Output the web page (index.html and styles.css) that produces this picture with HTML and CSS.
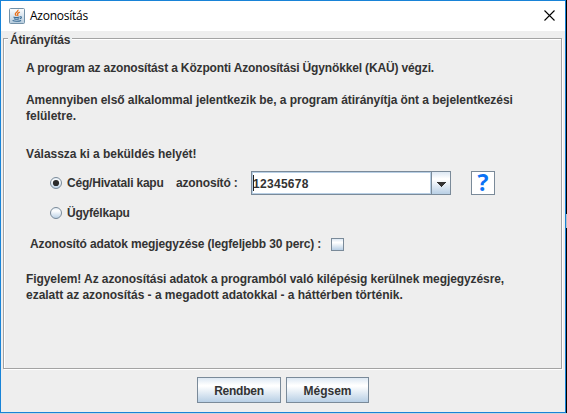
FILE: index.html
```html
<!DOCTYPE html>
<html lang="hu">
<head>
<meta charset="utf-8">
<title>Azonosítás</title>
<link rel="stylesheet" href="styles.css">
</head>
<body>
<div class="window">
  <header class="titlebar">
    <svg class="app-icon" width="16" height="16" viewBox="0 0 16 16">
      <defs><linearGradient id="tile" x1="0" y1="0" x2="0" y2="1"><stop offset="0" stop-color="#fdfefe"/><stop offset="1" stop-color="#b5cbdd"/></linearGradient></defs>
      <rect x=".5" y=".5" width="15" height="15" rx="1" fill="url(#tile)" stroke="#7391a8"/>
      <path d="M9 1.8C9.6 3.8 6 4.4 6.3 6.2c.1.8.9 1.2 1 2M10.8 4.2C8.4 5.2 8.2 6.2 8.8 7c.3.4 0 .8-.3 1.2" fill="none" stroke="#e8711c" stroke-width="1.3"/>
      <path d="M4.5 8.9c1.5.7 4.3.6 6 0M5 10.8c1.6.6 3.6.6 5 0M3.6 12.6c2 .9 6.3.9 8.5-.2M10.8 8.8c2.2-.6 2 1.6-.1 2" fill="none" stroke="#386b95" stroke-width="1.1"/>
    </svg>
    <span class="title">Azonosítás</span>
    <svg class="close" width="11" height="11" viewBox="0 0 11 11"><path d="M.5 .5l10 10M10.5 .5l-10 10" stroke="#000" stroke-width="1.1"/></svg>
  </header>
  <main class="group">
    <h1 class="legend">Átirányítás</h1>
    <p class="intro">A program az azonosítást a Központi Azonosítási Ügynökkel (KAÜ) végzi.</p>
    <p class="redirect"><span class="redirect-first">Amennyiben első alkalommal jelentkezik be, a program átirányítja önt a bejelentkezési</span><br>felületre.</p>
    <p class="choose">Válassza ki a beküldés helyét!</p>
    <div class="row row-company">
      <svg class="radio" width="12" height="12" viewBox="0 0 12 12"><defs><linearGradient id="ball" x1="0" y1="0" x2="0" y2="1"><stop offset="0" stop-color="#dce8f2"/><stop offset=".3" stop-color="#fff"/><stop offset="1" stop-color="#b8cfe5"/></linearGradient></defs><circle cx="6" cy="6" r="5.5" fill="url(#ball)" stroke="#7a8a99"/><circle cx="6" cy="6" r="3.1" fill="#2b2b2b"/></svg>
      <span class="company">Cég/Hivatali kapu</span>
      <span class="ident">azonosító :</span>
      <div class="combo"><div class="field"><span class="caret"></span>12345678</div><div class="arrow"><svg width="10" height="5" viewBox="0 0 10 5" shape-rendering="crispEdges"><path d="M0 0h10L5 5z" fill="#333"/></svg></div></div>
      <div class="help">?</div>
    </div>
    <div class="row row-client">
      <svg class="radio" width="12" height="12" viewBox="0 0 12 12"><circle cx="6" cy="6" r="5.5" fill="url(#ball)" stroke="#7a8a99"/></svg>
      <span class="client">Ügyfélkapu</span>
    </div>
    <div class="row row-remember">
      <span class="remember">Azonosító adatok megjegyzése (legfeljebb 30 perc) :</span>
      <span class="checkbox"></span>
    </div>
    <p class="notice"><span class="notice-first">Figyelem! Az azonosítási adatok a programból való kilépésig kerülnek megjegyzésre,</span><br><span class="notice-second">ezalatt az azonosítás - a megadott adatokkal - a háttérben történik.</span></p>
  </main>
  <footer class="actions">
    <button class="ok">Rendben</button>
    <button class="cancel">Mégsem</button>
  </footer>
</div>
<span class="edge-mark"></span>
</body>
</html>
```
FILE: styles.css
```css
* { box-sizing: border-box; }
body {
  margin: 0;
  width: 567px;
  height: 414px;
  overflow: hidden;
  background: linear-gradient(#000, #000) 566px 0 / 1px 413px no-repeat #c9d3dc;
  color: #333;
  font: bold 12px/16px "Liberation Sans", Arial, sans-serif;
  white-space: nowrap;
}
.window {
  width: 566px;
  height: 413px;
  border: 1px solid #1883d7;
  background: #eee;
}
.titlebar {
  display: flex;
  align-items: center;
  height: 30px;
  padding: 0 10px 0 8px;
  background: #fff;
}
.title {
  flex: 1;
  margin-left: 5px;
  color: #000;
  font: 12px/16px "Open Sans", "Noto Sans", sans-serif;
  letter-spacing: -.25px;
}
.close { display: block; margin-bottom: 1px; }
.group {
  width: 559px;
  height: 331px;
  margin: 7px 0 0 2px;
  border: 1px solid #a3a3a3;
  box-shadow: inset 1px 1px #fff, 1px 1px #fff;
}
.legend {
  width: 64px;
  height: 16px;
  margin: -7px 0 0 4px;
  padding-left: 2px;
  background: #eee;
  font: inherit;
  letter-spacing: -.15px;
}
p { margin: 0 0 0 22px; }
.intro { margin-top: 12px; letter-spacing: -.15px; }
.redirect { margin-top: 16px; }
.redirect-first { letter-spacing: -.055px; }
.choose { margin-top: 22px; letter-spacing: -.03px; }
.row { display: flex; align-items: center; }
.row-company { height: 24px; margin: 9px 0 0 46px; }
.radio { display: block; margin-right: 5px; }
.company { width: 109px; letter-spacing: -.2px; }
.ident { width: 75px; letter-spacing: -.15px; }
.combo {
  display: flex;
  width: 200px;
  height: 24px;
  border: 1px solid #7a8a99;
}
.field {
  position: relative;
  width: 179px;
  padding: 3px 0 0;
  border: 1px solid #b8cfe5;
  background: #fff;
  letter-spacing: .3px;
}
.caret {
  position: absolute;
  left: 0;
  top: 2px;
  width: 1px;
  height: 16px;
  background: #222;
}
.arrow {
  display: flex;
  align-items: center;
  justify-content: center;
  width: 19px;
  padding-top: 2px;
  border-left: 1px solid #7a8a99;
}
.arrow, .checkbox, button { background-image: linear-gradient(#dde8f3, #fff 30%, #fff 34%, #b8cfe5); }
.help {
  width: 24px;
  height: 24px;
  margin-left: 20px;
  border: 1px solid #7a8a99;
  background: #fff;
  color: #0a72f5;
  font: bold 23px/21px "Open Sans", sans-serif;
  text-align: center;
}
.row-client { height: 16px; margin: 10px 0 0 46px; }
.client { letter-spacing: -.2px; }
.row-remember { height: 16px; margin: 15px 0 0 26px; }
.remember { width: 301px; letter-spacing: -.135px; }
.checkbox {
  width: 13px;
  height: 13px;
  border: 1px solid #7a8a99;
}
.notice { margin-top: 19px; }
.notice-first { letter-spacing: -.085px; }
.notice-second { letter-spacing: -.02px; }
.actions {
  display: flex;
  gap: 5px;
  margin: 8px 0 0 196px;
}
button {
  height: 26px;
  padding: 1px 0 0;
  border: 1px solid #7a8a99;
  border-radius: 0;
  color: #333;
  font: inherit;
}
.ok { width: 84px; letter-spacing: -.25px; }
.cancel { width: 83px; }
.edge-mark {
  position: absolute;
  left: 566px;
  top: 214px;
  width: 1px;
  height: 14px;
  background: #b9bec3;
}
```
